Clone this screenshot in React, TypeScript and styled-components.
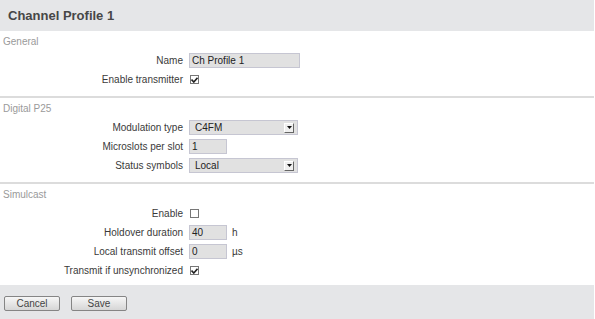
import * as React from 'react';
import styled, {createGlobalStyle} from "styled-components";

const GlobalStyle = createGlobalStyle`
    html, body {
        margin: 0;
        padding: 0;
        background: #fff;
    }
    body {
        font-family: "Liberation Sans", Arial, sans-serif;
        font-size: 10px;
        color: #3a3a3a;
    }
`;

type Field =
    | {kind: 'text'; label: string; value: string; width: number; unit?: string}
    | {kind: 'check'; label: string; checked: boolean}
    | {kind: 'select'; label: string; value: string};

interface Section {
    title: string;
    fields: Field[];
}

const sections: Section[] = [
    {
        title: 'General',
        fields: [
            {kind: 'text', label: 'Name', value: 'Ch Profile 1', width: 111},
            {kind: 'check', label: 'Enable transmitter', checked: true},
        ],
    },
    {
        title: 'Digital P25',
        fields: [
            {kind: 'select', label: 'Modulation type', value: 'C4FM'},
            {kind: 'text', label: 'Microslots per slot', value: '1', width: 38},
            {kind: 'select', label: 'Status symbols', value: 'Local'},
        ],
    },
    {
        title: 'Simulcast',
        fields: [
            {kind: 'check', label: 'Enable', checked: false},
            {kind: 'text', label: 'Holdover duration', value: '40', width: 38, unit: 'h'},
            {kind: 'text', label: 'Local transmit offset', value: '0', width: 38, unit: 'µs'},
            {kind: 'check', label: 'Transmit if unsynchronized', checked: true},
        ],
    },
];

const CheckBox = ({checked}: {checked: boolean}) => (
    <CheckBoxBox>
        {checked && (
            <svg width="7" height="6" viewBox="0 0 7 6">
                <path d="M0.5 2.5 L2.8 5 L6.5 0.8" stroke="#222" strokeWidth="1.6" fill="none"/>
            </svg>
        )}
    </CheckBoxBox>
);

const SelectBox = ({value}: {value: string}) => (
    <SelectWrap>
        <span>{value}</span>
        <ArrowButton>
            <svg width="5" height="3" viewBox="0 0 5 3">
                <path d="M0 0 H5 L2.5 3 Z" fill="#111"/>
            </svg>
        </ArrowButton>
    </SelectWrap>
);

const renderField = (f: Field) => {
    switch (f.kind) {
        case 'text':
            return <ValueCell>
                <TextInput style={{width: f.width}}>{f.value}</TextInput>
                {f.unit && <Unit>{f.unit}</Unit>}
            </ValueCell>;
        case 'check':
            return <ValueCell><CheckBox checked={f.checked}/></ValueCell>;
        case 'select':
            return <ValueCell><SelectBox value={f.value}/></ValueCell>;
    }
};

const App = () => {
    return <Page>
        <GlobalStyle/>
        <Header>Channel Profile 1</Header>
        {sections.map((s, i) => (
            <SectionBox key={s.title} last={i === sections.length - 1}>
                <SectionTitle>{s.title}</SectionTitle>
                <FormGrid>
                    {s.fields.map(f => (
                        <React.Fragment key={f.label}>
                            <Label>{f.label}</Label>
                            {renderField(f)}
                        </React.Fragment>
                    ))}
                </FormGrid>
            </SectionBox>
        ))}
        <Footer>
            <Button>Cancel</Button>
            <Button>Save</Button>
        </Footer>
    </Page>;
}

const Page = styled.div`
    width: 594px;
    height: 319px;
    display: flex;
    flex-direction: column;
    background: #fff;
`;
const Header = styled.div`
    height: 31px;
    background: #e5e6e8;
    display: flex;
    align-items: center;
    padding-left: 8px;
    font-size: 13px;
    font-weight: bold;
    color: #474747;
`;
const SectionBox = styled.div<{last: boolean}>`
    border-bottom: ${p => p.last ? 'none' : '2px solid #dcdcdc'};
    padding: 4px 0 ${p => p.last ? '7px' : '9px'};
`;
const SectionTitle = styled.div`
    padding-left: 3px;
    height: 14px;
    line-height: 14px;
    color: #9a9a9a;
    font-size: 10px;
`;
const FormGrid = styled.div`
    display: grid;
    grid-template-columns: 183px 1fr;
    column-gap: 6px;
    row-gap: 4px;
    margin-top: 4px;
`;
const Label = styled.div`
    text-align: right;
    line-height: 15px;
    color: #3a3a3a;
`;
const ValueCell = styled.div`
    display: flex;
    align-items: center;
    gap: 5px;
    height: 15px;
`;
const TextInput = styled.div`
    box-sizing: border-box;
    height: 15px;
    border: 1px solid #c6c6d2;
    background: #e1e1e1;
    padding-left: 2px;
    line-height: 13px;
    color: #222;
`;
const Unit = styled.span`
    color: #3a3a3a;
`;
const CheckBoxBox = styled.div`
    box-sizing: border-box;
    width: 9px;
    height: 9px;
    margin-left: 1px;
    border: 1px solid #777;
    background: #fff;
    display: flex;
    align-items: center;
    justify-content: center;
`;
const SelectWrap = styled.div`
    box-sizing: border-box;
    width: 109px;
    height: 15px;
    border: 1px solid #c6c6d2;
    background: #e1e1e1;
    display: flex;
    align-items: center;
    justify-content: space-between;
    padding: 0 3px 0 5px;
    color: #222;
`;
const ArrowButton = styled.div`
    box-sizing: border-box;
    width: 10px;
    height: 10px;
    background: #efefef;
    border: 1px solid;
    border-color: #fff #666 #666 #fff;
    display: flex;
    align-items: center;
    justify-content: center;
`;
const Footer = styled.div`
    flex: 1;
    background: #e5e6e8;
    display: flex;
    align-items: center;
    gap: 11px;
    padding: 3px 0 0 4px;
`;
const Button = styled.div`
    box-sizing: border-box;
    width: 56px;
    height: 15px;
    border: 1px solid #858585;
    border-radius: 2px;
    background: linear-gradient(#f6f6f6, #d6d6d6);
    display: flex;
    align-items: center;
    justify-content: center;
    color: #444;
`;

export default App;
